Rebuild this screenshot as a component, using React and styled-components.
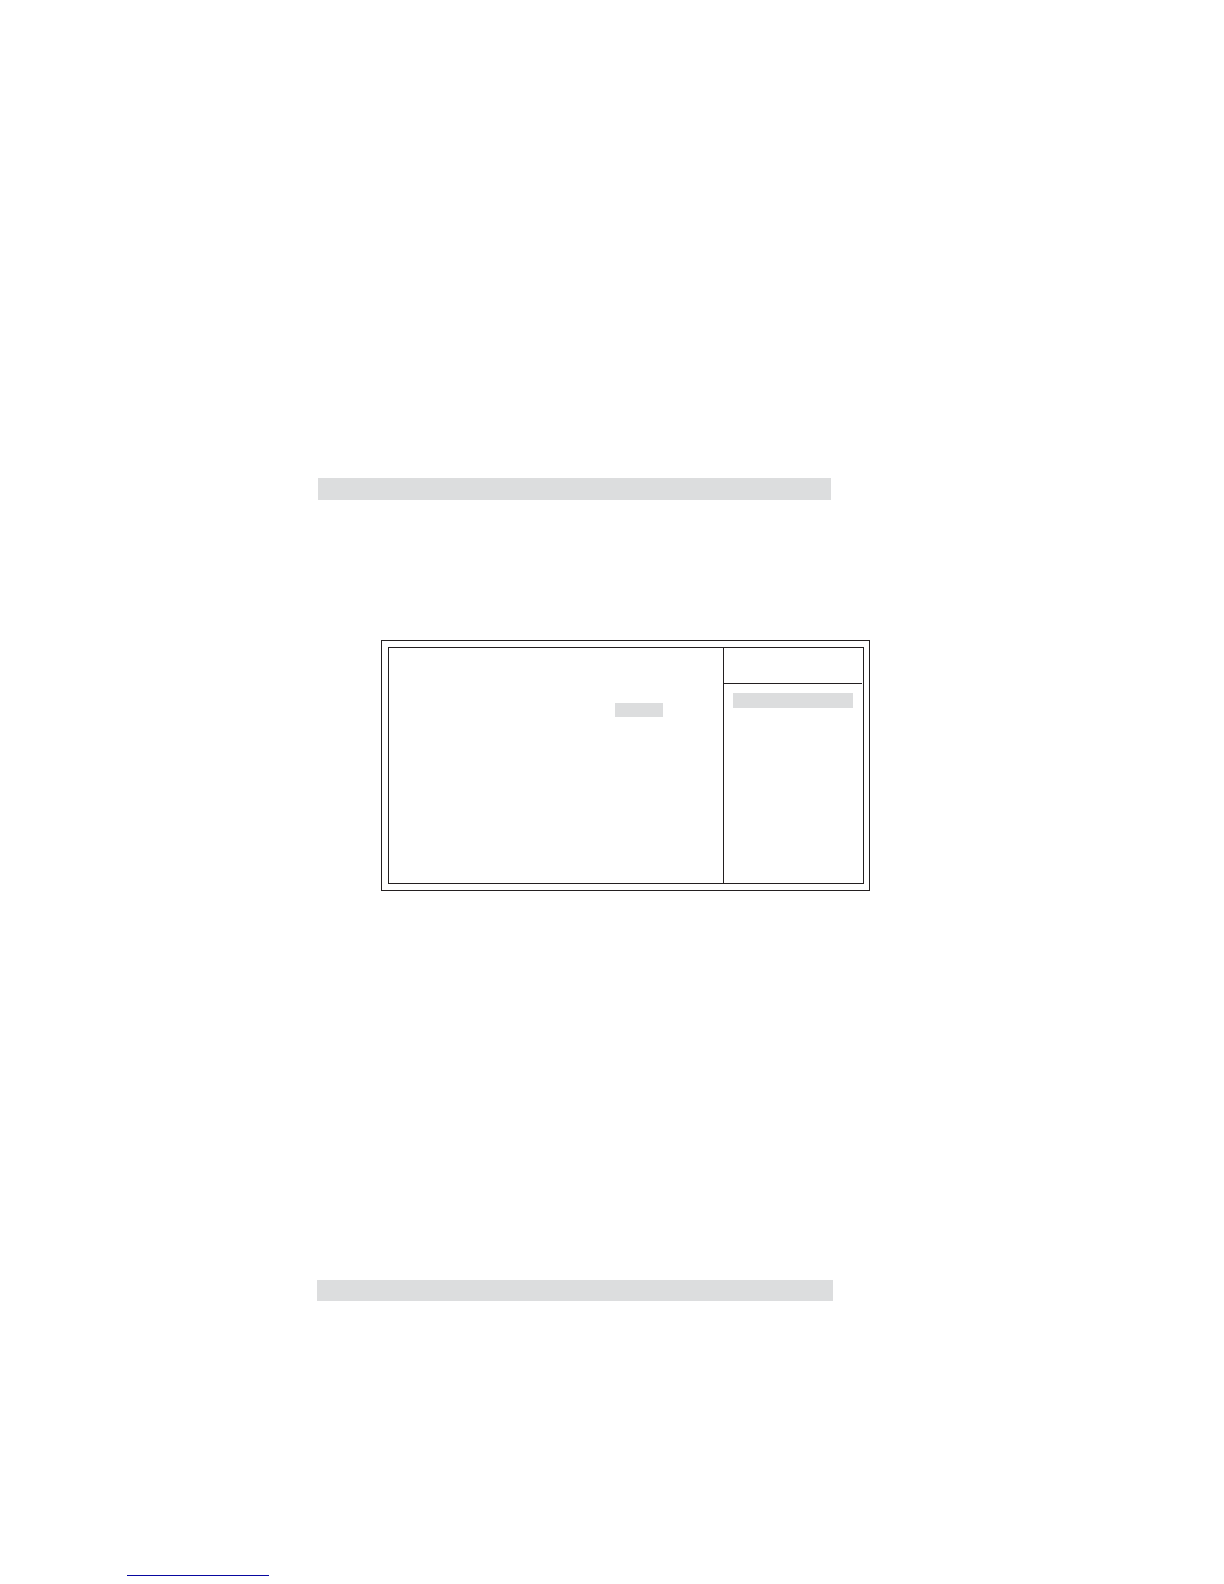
import React from 'react'
import styled, { createGlobalStyle } from 'styled-components'

const GlobalStyle = createGlobalStyle`
	* {
		box-sizing: border-box;
	}

	body {
		margin: 0;
		background-color: #fff;
		font-family: "Liberation Sans", Arial, sans-serif;
	}
`

function App() {
	return (
		<>
			<GlobalStyle />
			<Page>
				<Content>
					<HeadingBar />
					<Screen>
						<ScreenInner>
							<Options>
								<Value />
							</Options>
							<Help>
								<HelpTitle />
								<HelpHighlight />
							</Help>
						</ScreenInner>
					</Screen>
					<SectionBar />
				</Content>
				<Footer>
					<FooterRule />
				</Footer>
			</Page>
		</>
	)
}

const Page = styled.div`
	display: flex;
	flex-direction: column;
	min-height: 100vh;
`

const Content = styled.main`
	padding: 478px 391px 0 317px;
`

const Bar = styled.div`
	background-color: #dcddde;
`

const HeadingBar = styled(Bar)`
	height: 22px;
	margin: 0 2px 140px 1px;
`

const SectionBar = styled(Bar)`
	height: 21px;
`

/* double frame of the setup screen, it runs past the text column */
const Screen = styled.section`
	margin: 0 -37px 389px 64px;
	padding: 6px 5px 6px 6px;
	border: 1px solid #231f20;
`

const ScreenInner = styled.div`
	display: grid;
	grid-template-columns: 1fr 140px;
	min-height: 237px;
	border: 1px solid #231f20;
`

const Options = styled.div`
	display: flex;
	justify-content: flex-end;
	padding: 55px 60px 0 0;
`

const Value = styled(Bar)`
	width: 48px;
	height: 14px;
`

const Help = styled.aside`
	border-left: 1px solid #231f20;
`

const HelpTitle = styled.div`
	height: 36px;
	margin-right: 1px;
	border-bottom: 1px solid #231f20;
`

const HelpHighlight = styled(Bar)`
	height: 15px;
	margin: 9px 10px 0 9px;
`

const Footer = styled.footer`
	margin-top: auto;
	padding: 0 127px 8px;
`

const FooterRule = styled.hr`
	width: 142px;
	margin: 0;
	border: none;
	border-top: 1px solid #0808a0;
`

export default App
